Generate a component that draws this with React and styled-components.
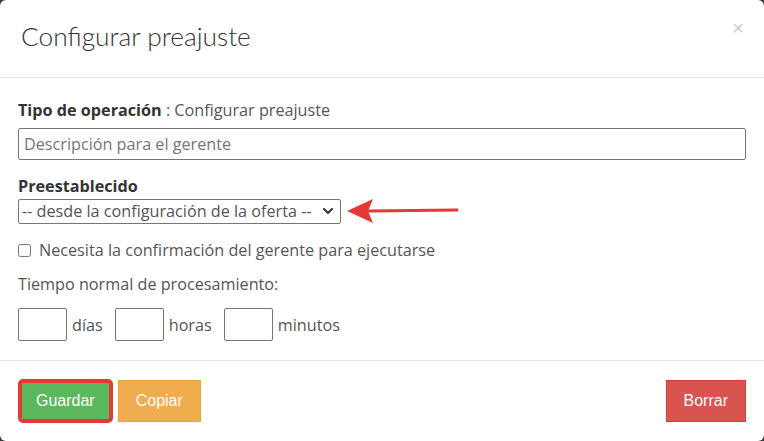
import React from 'react'
import styled, { createGlobalStyle } from 'styled-components'

const GlobalStyle = createGlobalStyle`
    html, body {
        margin: 0;
        padding: 0;
        background: #3a3a3a;
    }
    body {
        font-family: "Open Sans", Lato, sans-serif;
        color: #555;
    }
`

const chevron = encodeURIComponent(
    '<svg xmlns="http://www.w3.org/2000/svg" width="10" height="6" viewBox="0 0 10 6"><path d="M1 1l4 4 4-4" fill="none" stroke="#333" stroke-width="2" stroke-linecap="round" stroke-linejoin="round"/></svg>'
)

const Modal = styled.div`
    width: 764px;
    height: 441px;
    background: #fff;
    border-radius: 6px;
    box-sizing: border-box;
    display: flex;
    flex-direction: column;
    overflow: hidden;
`

const Header = styled.div`
    height: 78px;
    box-sizing: border-box;
    border-bottom: 1px solid #e5e5e5;
    padding: 0 20px 0 21px;
    display: flex;
    align-items: center;
    justify-content: space-between;
`

const Title = styled.h4`
    margin: 0 0 5px;
    font-family: Lato, sans-serif;
    font-weight: 300;
    font-size: 26.3px;
    color: #333;
`

const Close = styled.button`
    border: 0;
    background: none;
    padding: 0;
    margin-top: -22px;
    font-size: 20px;
    line-height: 1;
    color: #ccc;
    font-family: "Liberation Sans", sans-serif;
    cursor: pointer;
`

const Body = styled.div`
    flex: 1;
    padding: 22px 18px 0;
    border-bottom: 1px solid #e5e5e5;
    font-size: 16.2px;
`

const Line = styled.div`
    line-height: 20px;
`

const Strong = styled.b`
    font-weight: 700;
    color: #333;
`

const TextInput = styled.input.attrs({ type: 'text' })`
    display: block;
    box-sizing: border-box;
    width: 728px;
    height: 32px;
    margin: 8px 0 16px;
    padding: 0 5px;
    border: 1px solid #767676;
    border-radius: 2px;
    font: inherit;
    color: #555;

    ::placeholder {
        color: #999;
    }
`

const SelectRow = styled.div`
    display: flex;
    align-items: center;
    gap: 6px;
    margin: 2px 0 16px;
`

const Select = styled.select`
    box-sizing: border-box;
    width: 323px;
    height: 25px;
    border: 1px solid #767676;
    border-radius: 2px;
    font: inherit;
    color: #555;
    padding: 0 20px 0 3px;
    appearance: none;
    background: #fff url("data:image/svg+xml,${chevron}") no-repeat right 7px center;
`

const CheckRow = styled.label`
    display: flex;
    align-items: center;
    gap: 8px;
    line-height: 20px;
    margin-bottom: 14px;
`

const Check = styled.input.attrs({ type: 'checkbox' })`
    margin: 0;
    width: 13px;
    height: 13px;
`

const TimeRow = styled.div`
    display: flex;
    align-items: center;
    margin-top: 14px;
`

const TimeInput = styled.input.attrs({ type: 'text' })`
    box-sizing: border-box;
    width: 49px;
    height: 33px;
    border: 1px solid #767676;
    border-radius: 2px;
    margin: 0 5px 0 0;
`

const Unit = styled.span`
    margin-right: 12px;
`

const Footer = styled.div`
    height: 80px;
    box-sizing: border-box;
    padding: 0 18px 0 18px;
    display: flex;
    align-items: center;
    gap: 5px;
`

const colors = {
    success: ['#5cb85c', '#4cae4c'],
    warning: ['#f0ad4e', '#eea236'],
    danger: ['#d9534f', '#d43f3a'],
}

const Button = styled.button`
    box-sizing: border-box;
    padding: 0 ${props => (props.marked ? '14px' : '17px')};
    border: ${props => (props.marked ? '4px solid #e53935' : `1px solid ${colors[props.kind][1]}`)};
    border-radius: ${props => (props.marked ? '5px' : '0')};
    background: ${props => colors[props.kind][0]};
    color: #fff;
    font-family: "Liberation Sans", Arial, sans-serif;
    font-size: 16px;
    margin-left: ${props => (props.right ? 'auto' : '0')};
    height: ${props => (props.marked ? '44px' : '42px')};
`

const Arrow = () => (
    <svg width="112" height="26" viewBox="0 0 112 26">
        <line x1="22" y1="13" x2="110" y2="12" stroke="#e53935" strokeWidth="3" strokeLinecap="round" />
        <polygon points="0,13 26,1 21,13 26,25" fill="#e53935" />
    </svg>
)

export default function App() {
    return (
        <>
            <GlobalStyle />
            <Modal>
                <Header>
                    <Title>Configurar preajuste</Title>
                    <Close>×</Close>
                </Header>
                <Body>
                    <Line>
                        <Strong>Tipo de operación</Strong> : Configurar preajuste
                    </Line>
                    <TextInput placeholder="Descripción para el gerente" />
                    <Line>
                        <Strong>Preestablecido</Strong>
                    </Line>
                    <SelectRow>
                        <Select defaultValue="">
                            <option value="">-- desde la configuración de la oferta --</option>
                        </Select>
                        <Arrow />
                    </SelectRow>
                    <CheckRow>
                        <Check />
                        Necesita la confirmación del gerente para ejecutarse
                    </CheckRow>
                    <Line>Tiempo normal de procesamiento:</Line>
                    <TimeRow>
                        <TimeInput />
                        <Unit>días</Unit>
                        <TimeInput />
                        <Unit>horas</Unit>
                        <TimeInput />
                        <Unit>minutos</Unit>
                    </TimeRow>
                </Body>
                <Footer>
                    <Button kind="success" marked>Guardar</Button>
                    <Button kind="warning">Copiar</Button>
                    <Button kind="danger" right>Borrar</Button>
                </Footer>
            </Modal>
        </>
    )
}
